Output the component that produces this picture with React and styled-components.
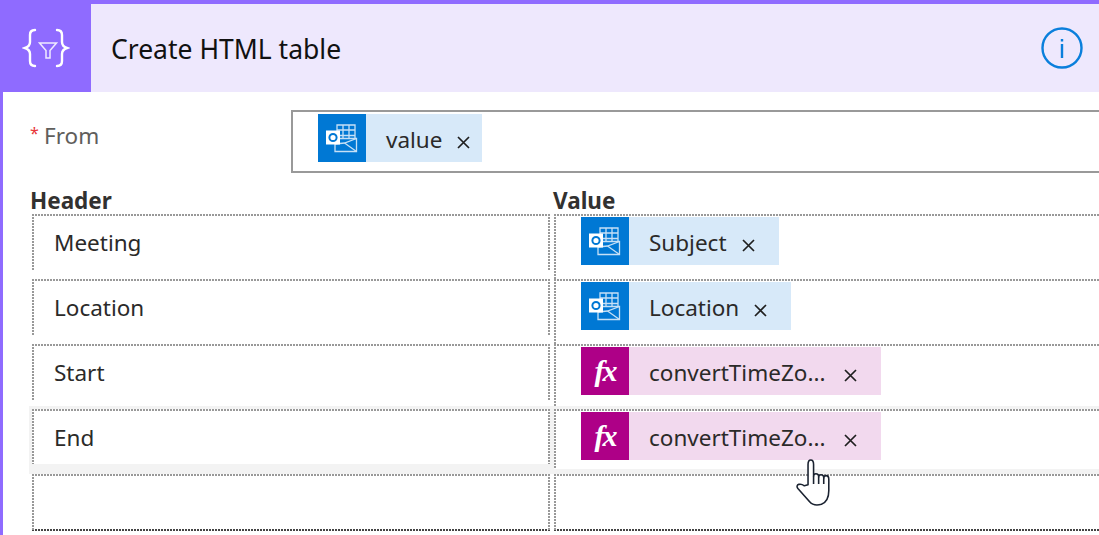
import React from 'react';
import styled, { createGlobalStyle } from 'styled-components';

const GlobalStyle = createGlobalStyle`
  html, body {
    margin: 0;
    padding: 0;
    height: 535px;
    overflow: hidden;
    background: #fff;
    font-family: "Noto Sans", "Open Sans", sans-serif;
  }
`;

const dotsX = (color = '#999') =>
  `repeating-linear-gradient(90deg, ${color} 0 2px, transparent 2px 3px)`;
const dotsY = (color = '#999') =>
  `repeating-linear-gradient(180deg, ${color} 0 2px, transparent 2px 3px)`;

const Card = styled.div`
  position: relative;
  height: 531px;
  overflow: hidden;
  border-top: 4px solid #8f6bff;
  border-left: 3px solid #8f6bff;
`;

const Header = styled.header`
  display: flex;
  align-items: center;
  height: 88px;
  margin-left: -3px;
  background: #eee8fd;
`;

const HeaderTile = styled.div`
  display: flex;
  align-items: center;
  justify-content: center;
  width: 91px;
  height: 88px;
  background: #8f6bff;
`;

const Title = styled.h1`
  flex: 1;
  margin: 2px 0 0 20px;
  font-size: 26.500px;
  font-weight: 400;
  color: #111;
`;

const InfoButton = styled.div`
  display: flex;
  margin-right: 16px;
`;

const FromRow = styled.div`
  display: flex;
  margin: 18px -6px 0 27px;
`;

const FromLabel = styled.label`
  display: flex;
  width: 261px;
  padding-top: 11px;
  font-size: 22.500px;
  line-height: 30px;
  color: #605e5c;
`;

const Required = styled.span`
  width: 14px;
  font-size: 16px;
  line-height: 24px;
  color: #e8363a;
`;

const FromBox = styled.div`
  flex: 1;
  display: flex;
  height: 59px;
  padding-left: 25px;
  border: 2px solid #999;
`;

const FromChipSlot = styled.div`
  margin-top: 2px;
`;

const TableHeads = styled.div`
  display: grid;
  grid-template-columns: 523px 1fr;
  margin: 13px 0 0 27px;
  height: 28px;
`;

const HeadLabel = styled.div`
  font-size: 22.500px;
  line-height: 30px;
  font-weight: 700;
  color: #323130;
`;

const Rows = styled.div`
  display: flex;
  flex-direction: column;
`;

const Row = styled.div`
  display: grid;
  grid-template-columns: 521px 1fr;
  height: ${({ $active }) => ($active ? '68px' : '65px')};
  margin-top: ${({ $active }) => ($active ? '-3px' : '0')};
  margin-left: 26px;
  padding-top: ${({ $active }) => ($active ? '3px' : '0')};
  background: ${({ $active }) => ($active ? '#f3f3f3' : 'transparent')};
  box-sizing: border-box;
`;

const Cell = styled.div`
  display: flex;
  align-items: flex-start;
  box-sizing: border-box;
  background-color: #fff;
  background-image: ${dotsX()}, ${dotsY()};
  background-size: 100% 2px, 2px 100%;
  background-position: 0 0, 0 0;
  background-repeat: no-repeat;
`;

const HeaderCell = styled(Cell)`
  height: ${({ $active }) => ($active ? '55px' : '56px')};
  margin-left: 3px;
  padding: 14px 0 0 22px;
  font-size: 22.500px;
  line-height: 30px;
  color: #2b2a29;
  background-image: ${dotsX()}, ${dotsY()}, ${dotsY()};
  background-size: 100% 2px, 2px 100%, 2px 100%;
  background-position: 0 0, 0 0, 100% 0;
`;

const ValueCell = styled(Cell)`
  height: ${({ $active }) => ($active ? '60px' : '65px')};
  margin-left: 4px;
  padding: 3px 0 0 27px;
`;

const LastRow = styled.div`
  display: grid;
  grid-template-columns: 521px 1fr;
  height: 57px;
  margin-left: 26px;
`;

const EmptyHeaderCell = styled(Cell)`
  margin-left: 3px;
  background-image: ${dotsX()}, ${dotsY()}, ${dotsY()}, ${dotsX('#444')};
  background-size: 100% 2px, 2px 100%, 2px 100%, 100% 2px;
  background-position: 0 0, 0 0, 100% 0, 0 100%;
`;

const EmptyValueCell = styled(Cell)`
  margin-left: 4px;
  background-image: ${dotsX()}, ${dotsY()}, ${dotsX('#444')};
  background-size: 100% 2px, 2px 100%, 100% 2px;
  background-position: 0 0, 0 0, 0 100%;
`;

const Chip = styled.div`
  display: flex;
  align-items: center;
  width: ${({ $width }) => $width}px;
  height: 48px;
  background: ${({ $fx }) => ($fx ? '#f2d9ee' : '#d7e9f9')};
`;

const ChipTile = styled.div`
  display: flex;
  align-items: center;
  justify-content: center;
  flex: none;
  width: 48px;
  height: 48px;
  background: ${({ $fx }) => ($fx ? '#ae0087' : '#0078d4')};
`;

const FxGlyph = styled.span`
  font-family: "Liberation Serif", serif;
  font-style: italic;
  font-weight: 700;
  font-size: 30px;
  line-height: 48px;
  letter-spacing: -2px;
  color: #fff;
`;

const ChipText = styled.span`
  margin-left: 20px;
  padding-top: 3px;
  font-size: 22.500px;
  line-height: 30px;
  color: #2b2a29;
  white-space: nowrap;
`;

const ChipClose = styled.span`
  display: flex;
  margin-left: auto;
  margin-right: ${({ $inset }) => $inset}px;
  padding-top: 8px;
`;

const HandCursor = styled.svg`
  position: absolute;
  left: 793px;
  top: 455px;
`;

const BracesIcon = () => (
  <svg width="48" height="42" viewBox="0 0 48 42" fill="none" stroke="#fff" strokeLinecap="round">
    <path strokeWidth="2.400" d="M13 3c-4 0-5 2-5 5v7c0 3-2 5-5 6 3 1 5 3 5 6v7c0 3 1 5 5 5" />
    <path strokeWidth="2.400" d="M35 3c4 0 5 2 5 5v7c0 3 2 5 5 6-3 1-5 3-5 6v7c0 3-1 5-5 5" />
    <path strokeWidth="1.500" stroke="#f0ebff" strokeLinejoin="miter" d="M17.500 16h17l-6.500 7.500V31h-4v-7.500z" />
  </svg>
);

const InfoIcon = () => (
  <svg width="42" height="42" viewBox="0 0 42 42" fill="none">
    <circle cx="21" cy="21" r="19.500" stroke="#0a7fdc" strokeWidth="2.400" />
    <rect x="19.800" y="17" width="2.400" height="14" fill="#0a7fdc" />
    <rect x="19.800" y="12" width="2.400" height="2.500" fill="#0a7fdc" />
  </svg>
);

const OutlookIcon = () => (
  <svg width="48" height="48" viewBox="0 0 48 48" fill="none" stroke="#c6e0f6" strokeWidth="1.300">
    <path d="M19 11h18v17H19z" />
    <path d="M19 16h18M19 21.500h18M25 11v17M31 11v17" />
    <path d="M17 24.500h21.500v13H17z" fill="#0078d4" />
    <path d="M17 30l9.500-1 12-4.500" />
    <path d="M26.500 29l12 8.500" />
    <rect x="8" y="16.500" width="14" height="14" fill="#fff" stroke="none" />
    <circle cx="15" cy="23.500" r="3.600" stroke="#0078d4" strokeWidth="2" />
  </svg>
);

const CloseIcon = () => (
  <svg width="13" height="13" viewBox="0 0 13 13" stroke="#1f1f1f" strokeWidth="1.700">
    <path d="M1 1l11 11M12 1L1 12" />
  </svg>
);

const rows = [
  { label: 'Meeting', chip: 'Subject', width: 198, inset: 24 },
  { label: 'Location', chip: 'Location', width: 210, inset: 24 },
  { label: 'Start', chip: 'convertTimeZo...', width: 300, inset: 24, fx: true },
  { label: 'End', chip: 'convertTimeZo...', width: 300, inset: 24, fx: true, active: true },
];

function TokenChip({ fx, text, width, inset }) {
  return (
    <Chip $fx={fx} $width={width}>
      <ChipTile $fx={fx}>
        {fx ? <FxGlyph>fx</FxGlyph> : <OutlookIcon />}
      </ChipTile>
      <ChipText>{text}</ChipText>
      <ChipClose $inset={inset}><CloseIcon /></ChipClose>
    </Chip>
  );
}

export default function App() {
  return (
    <>
      <GlobalStyle />
      <Card>
        <Header>
          <HeaderTile><BracesIcon /></HeaderTile>
          <Title>Create HTML table</Title>
          <InfoButton><InfoIcon /></InfoButton>
        </Header>

        <FromRow>
          <FromLabel><Required>*</Required>From</FromLabel>
          <FromBox>
            <FromChipSlot>
              <TokenChip text="value" width={164} inset={12} />
            </FromChipSlot>
          </FromBox>
        </FromRow>

        <TableHeads>
          <HeadLabel>Header</HeadLabel>
          <HeadLabel>Value</HeadLabel>
        </TableHeads>

        <Rows>
          {rows.map((row) => (
            <Row key={row.label} $active={row.active}>
              <HeaderCell $active={row.active}>{row.label}</HeaderCell>
              <ValueCell $active={row.active}>
                <TokenChip fx={row.fx} text={row.chip} width={row.width} inset={row.inset} />
              </ValueCell>
            </Row>
          ))}
          <LastRow>
            <EmptyHeaderCell />
            <EmptyValueCell />
          </LastRow>
        </Rows>

        <HandCursor width="37" height="48" viewBox="0 0 40 52" fill="#fff" stroke="#1a2230" strokeWidth="1.700" strokeLinejoin="round">
          <path d="M13 28V6c0-3 1-5 3-5s3 2 3 5v13c0-2 1-3 2.500-3s3 1 3 3v1c0-2 1-3 2.500-3s3 1 3 3v1c0-2 1-3 2.500-3s3 1.500 3 4v12c0 8-3 13-8 15-5 1.500-10 .5-13-3L2 32c-1.500-2-1-4 1-4.500 2-.5 4 0 6 1.500z" />
          <path fill="none" d="M19 19v8M24.500 20v7M30 21v6" />
        </HandCursor>
      </Card>
    </>
  );
}
